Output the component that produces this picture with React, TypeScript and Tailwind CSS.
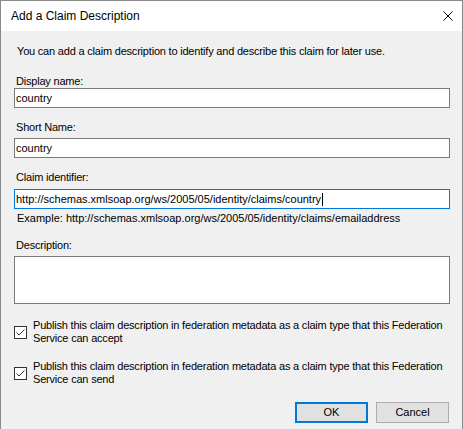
import React from "react";

function CheckBox() {
  return (
    <svg width="13" height="13" viewBox="0 0 13 13" className="shrink-0 mt-[7px]">
      <rect x="0.5" y="0.5" width="12" height="12" fill="#ffffff" stroke="#333333" strokeWidth="1" />
      <path d="M2.5 6.5 L5 9 L10.5 3.5" fill="none" stroke="#333333" strokeWidth="1" />
    </svg>
  );
}

export default function App() {
  return (
    <div className="w-[463px] h-[429px] bg-white overflow-hidden font-['Liberation_Sans',Arial,sans-serif] text-[11px] leading-[13px] text-black">
      <div className="flex flex-col h-full border-x border-t border-[#8a8a8a]">
        <div className="h-[30px] shrink-0 bg-white flex items-center justify-between pl-[10px] pr-[9px]">
          <span className="text-[12px] leading-[14px]">Add a Claim Description</span>
          <svg width="10" height="10" viewBox="0 0 10 10" className="mb-[1px]">
            <path d="M0.5 0.5 L9.5 9.5 M9.5 0.5 L0.5 9.5" stroke="#000000" strokeWidth="1" />
          </svg>
        </div>
        <div className="flex-1 bg-[#f0f0f0] flex flex-col pl-[13px] pr-[12px] pt-[14px]">
          <div className="ml-[3px] tracking-[-0.2px]">
            You can add a claim description to identify and describe this claim for later use.
          </div>

          <div className="mt-[17px] ml-[2px] tracking-[-0.2px]">Display name:</div>
          <div className="h-[20px] bg-white border border-[#7a7a7a] flex items-center pl-[1px]">country</div>

          <div className="mt-[13px] ml-[2px] tracking-[-0.2px]">Short Name:</div>
          <div className="mt-[4px] h-[20px] bg-white border border-[#7a7a7a] flex items-center pl-[1px]">country</div>

          <div className="mt-[13px] ml-[2px] tracking-[-0.2px]">Claim identifier:</div>
          <div className="mt-[5px] h-[20px] bg-white border border-[#0078d7] flex items-center pl-[1px]">
            <span>http://schemas.xmlsoap.org/ws/2005/05/identity/claims/country</span>
            <span className="inline-block w-px h-[13px] bg-black ml-[1px]"></span>
          </div>
          <div className="mt-[3px] ml-[3px]">
            Example: http://schemas.xmlsoap.org/ws/2005/05/identity/claims/emailaddress
          </div>

          <div className="mt-[14px] ml-[2px] tracking-[-0.2px]">Description:</div>
          <div className="mt-[4px] h-[48px] bg-white border border-[#7a7a7a]"></div>

          <div className="mt-[15px] flex items-start">
            <CheckBox />
            <div className="ml-[6px] tracking-[-0.2px]">
              Publish this claim description in federation metadata as a claim type that this Federation Service can accept
            </div>
          </div>

          <div className="mt-[15px] flex items-start">
            <CheckBox />
            <div className="ml-[6px] tracking-[-0.2px]">
              Publish this claim description in federation metadata as a claim type that this Federation Service can send
            </div>
          </div>

          <div className="mt-[16px] flex justify-end gap-[8px] pr-[1px]">
            <div className="w-[73px] h-[21px] bg-[#e1e1e1] border-2 border-[#0078d7] flex items-center justify-center">OK</div>
            <div className="w-[73px] h-[21px] bg-[#e1e1e1] border border-[#adadad] flex items-center justify-center">Cancel</div>
          </div>
        </div>
      </div>
    </div>
  );
}
